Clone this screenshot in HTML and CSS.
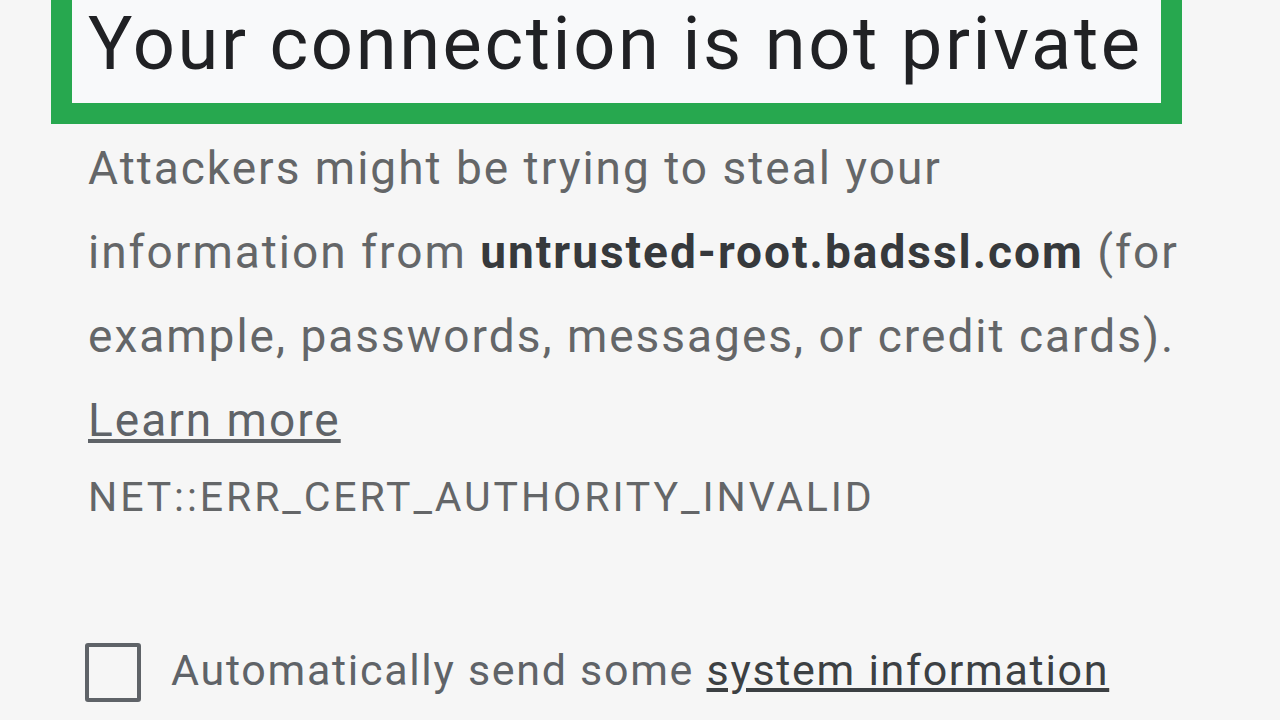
FILE: index.html
```html
<!DOCTYPE html>
<html lang="en">
<head>
  <meta charset="UTF-8">
  <meta name="viewport" content="width=device-width, initial-scale=1.0">
  <title>Privacy error</title>
  <link rel="stylesheet" href="styles.css">
</head>
<body>
  <div class="wrapper">
    <div class="headline">
      <h1>Your connection is not private</h1>
    </div>

    <div class="main-message">
      <p>Attackers might be trying to steal your information from <strong>untrusted-root.badssl.com</strong> (for example, passwords, messages, or credit cards). <a href="#">Learn more</a></p>
      <div class="error-code">NET::ERR_CERT_AUTHORITY_INVALID</div>
    </div>

    <label class="report">
      <span class="checkbox"></span>
      <span>Automatically send some <a href="#">system information</a></span>
    </label>
  </div>
</body>
</html>
```

FILE: styles.css
```css
body {
  margin: 0;
  background-color: #f6f6f6;
  font-family: Roboto, "Noto Sans", Arial, sans-serif;
  overflow: hidden;
}

.wrapper {
  width: 1131px;
  margin-left: 51px;
}

.headline {
  margin-top: -28px;
  border: 21px solid #27a84f;
  background-color: #f8f9fa;
  padding: 12px 0 20px 16px;
}

.headline h1 {
  margin: 0;
  font-size: 74px;
  font-weight: 400;
  line-height: 78px;
  letter-spacing: 2.6px;
  color: #202124;
  white-space: nowrap;
}

.main-message {
  padding-left: 37px;
  color: #646668;
}

.main-message p {
  margin: 2px 0 0;
  font-size: 46px;
  line-height: 84px;
  letter-spacing: 2px;
  width: 1110px;
}

.main-message strong {
  color: #36393c;
  font-weight: 700;
}

.main-message a {
  color: #5f6368;
}

.error-code {
  font-size: 41px;
  line-height: 70px;
  letter-spacing: 2.9px;
}

.report {
  display: flex;
  align-items: center;
  gap: 30px;
  margin-top: 105px;
  padding-left: 34px;
  font-size: 43px;
  letter-spacing: 1.7px;
  color: #5f6368;
}

.report a {
  color: #3c4043;
}

.checkbox {
  width: 48px;
  height: 51px;
  margin-top: 6px;
  border: 4px solid #5f6368;
  border-radius: 3px;
  flex: none;
}
```
